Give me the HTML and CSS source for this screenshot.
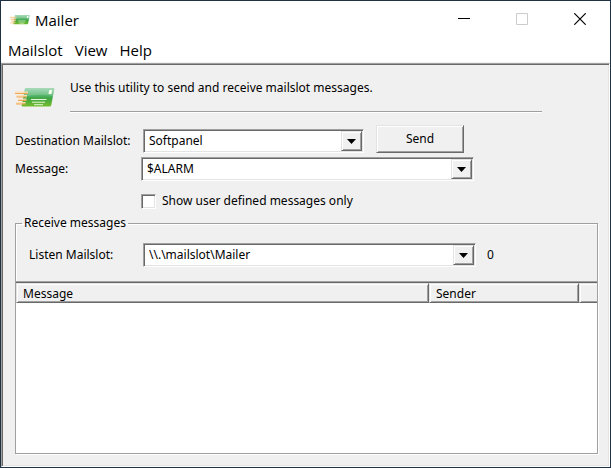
FILE: index.html
```html
<!DOCTYPE html>
<html lang="en">
<head>
<meta charset="utf-8">
<title>Mailer</title>
<link rel="stylesheet" href="styles.css">
</head>
<body>
<svg class="defs" aria-hidden="true">
  <defs>
    <linearGradient id="green" x1="0" y1="0" x2="0" y2="1">
      <stop offset="0" stop-color="#9bd4b0"/>
      <stop offset=".4" stop-color="#56b56c"/>
      <stop offset=".55" stop-color="#3fa545"/>
      <stop offset="1" stop-color="#74bd2c"/>
    </linearGradient>
    <symbol id="mail" viewBox="0 0 40 22">
      <path d="M11 1h27.500q1 0 .8 1l-3 16q-.3 1.500-1.600 1.500H7.500q-1 0-.8-1L9.800 2q.2-1 1.200-1z" fill="url(#green)"/>
      <path d="M11 1h27.500q1 0 .8 1l-1.300 7Q24 6 9 10L9.800 2q.2-1 1.200-1z" fill="#fff" opacity=".15"/>
      <path d="M34.300 3h2.900l-.8 4h-2.900z" fill="#f4fff0"/>
      <path d="M16 12.500h15.500M17 15.200h13M19 17.700h9" stroke="#e4f7da" stroke-width="1"/>
      <path d="M0 6.300h13M1.500 9.800h10.500M3 13.300h8.500M1 16.800h9.500" stroke="#f0a850" stroke-width="1.300"/>
      <path d="M0 5.100h13M1.500 8.600h10.500M3 12.100h8.500M1 15.600h9.500" stroke="#fbdfb8" stroke-width="1.300"/>
    </symbol>
  </defs>
</svg>
<div class="window">
  <header class="titlebar">
    <svg class="app-icon" aria-hidden="true"><use href="#mail"/></svg>
    <h1>Mailer</h1>
    <div class="controls">
      <button type="button" aria-label="Minimize"><svg width="12" height="12" viewBox="0 0 12 12"><path d="M0 5.500h12" stroke="#000"/></svg></button>
      <button type="button" aria-label="Maximize" disabled><svg width="12" height="12" viewBox="0 0 12 12"><path d="M.5.5h11v11H.5z" fill="none" stroke="#ccc"/></svg></button>
      <button type="button" aria-label="Close"><svg width="12" height="12" viewBox="0 0 12 12"><path d="M.3.3l11.400 11.400M11.700.3L.3 11.700" stroke="#000" stroke-width="1.200"/></svg></button>
    </div>
  </header>
  <nav class="menubar">
    <button type="button">Mailslot</button>
    <button type="button">View</button>
    <button type="button">Help</button>
  </nav>
  <main class="content">
    <div class="intro">
      <svg class="intro-icon" aria-hidden="true"><use href="#mail"/></svg>
      <p>Use this utility to send and receive mailslot messages.</p>
    </div>
    <form class="send-form">
      <div class="row destination">
        <label for="destination">Destination Mailslot:</label>
        <span class="combo short">
          <select id="destination"><option>Softpanel</option></select>
          <span class="drop"><svg width="9" height="5" viewBox="0 0 9 5"><path d="M0 0h9L4.500 5z"/></svg></span>
        </span>
        <button class="send" type="button">Send</button>
      </div>
      <div class="row">
        <label for="message">Message:</label>
        <span class="combo">
          <select id="message"><option>$ALARM</option></select>
          <span class="drop"><svg width="9" height="5" viewBox="0 0 9 5"><path d="M0 0h9L4.500 5z"/></svg></span>
        </span>
      </div>
      <label class="check"><input type="checkbox">Show user defined messages only</label>
    </form>
    <fieldset class="receive">
      <legend>Receive messages</legend>
      <div class="row listen">
        <label for="listen">Listen Mailslot:</label>
        <span class="combo">
          <select id="listen"><option>\\.\mailslot\Mailer</option></select>
          <span class="drop"><svg width="9" height="5" viewBox="0 0 9 5"><path d="M0 0h9L4.500 5z"/></svg></span>
        </span>
        <output>0</output>
      </div>
      <table>
        <colgroup><col><col class="sender"><col class="rest"></colgroup>
        <thead><tr><th>Message</th><th>Sender</th><th></th></tr></thead>
      </table>
    </fieldset>
  </main>
</div>
</body>
</html>
```
FILE: styles.css
```css
* {
  box-sizing: border-box;
}

body {
  margin: 0;
  font: 12px/16px "Noto Sans", Tahoma, sans-serif;
  color: #000;
}

button, select {
  font: inherit;
  color: inherit;
}

.defs {
  position: absolute;
  width: 0;
  height: 0;
}

.window {
  display: flex;
  flex-direction: column;
  min-height: 100vh;
  border: 1px solid #1f3142;
  background: #fff;
}

.titlebar {
  display: flex;
  align-items: center;
  height: 37px;
  padding-left: 9px;
}

.app-icon {
  width: 20px;
  height: 12px;
}

h1 {
  margin: 0 auto 0 5px;
  font: 15px/20px "Open Sans", sans-serif;
}

.controls {
  display: flex;
}

.controls button {
  display: flex;
  align-items: center;
  justify-content: center;
  width: 58px;
  height: 37px;
  padding: 0 2px 2px 0;
  border: 0;
  background: none;
}

.menubar {
  display: flex;
  gap: 12px;
  height: 25px;
  padding-left: 7px;
  border-bottom: 1px solid #f0f0f0;
}

.menubar button {
  padding: 0;
  border: 0;
  background: none;
  font: 15px/24px "Open Sans", sans-serif;
}

.content,
.combo,
.check input {
  border: 1px solid;
  border-color: #a0a0a0 #fff #fff #a0a0a0;
  box-shadow: inset 1px 1px #696969, inset -1px -1px #e3e3e3;
}

.drop,
.send,
th {
  background: #f0f0f0;
  border: 1px solid;
  border-color: #e3e3e3 #696969 #696969 #e3e3e3;
  box-shadow: inset 1px 1px #fff, inset -1px -1px #a0a0a0;
}

.content {
  flex: 1;
  display: flex;
  flex-direction: column;
  padding: 14px 11px 12px 12px;
  background: #f0f0f0;
}

.intro {
  display: flex;
  gap: 15px;
  margin-left: 1px;
}

.intro-icon {
  width: 40px;
  height: 22px;
  margin-top: 9px;
}

.intro p {
  flex: 1;
  max-width: 472px;
  height: 34px;
  margin: 0;
  padding-top: 2px;
  border-bottom: 1px solid #a0a0a0;
  box-shadow: 0 1px #fff;
}

.send-form {
  padding: 13px 0 6px 1px;
}

.row {
  display: flex;
  align-items: center;
}

.row label {
  width: 126px;
  white-space: nowrap;
}

.destination {
  gap: 2px;
}

.combo {
  display: flex;
  width: 333px;
  height: 24px;
  padding: 1px;
  background: #fff;
}

.combo.short {
  width: 221px;
}

.combo select {
  flex: 1;
  min-width: 0;
  padding: 0 4px;
  border: 0;
  outline: 0;
  background: transparent;
  appearance: none;
}

.drop {
  display: flex;
  align-items: center;
  justify-content: center;
  width: 21px;
}

.send {
  width: 88px;
  height: 28px;
  margin: 0 0 4px 10px;
  padding: 0;
}

.check {
  display: flex;
  align-items: center;
  gap: 6px;
  width: max-content;
  margin: 12px 0 0 126px;
}

.check input {
  width: 15px;
  height: 15px;
  margin: 0;
  appearance: none;
  background: #fff;
}

.receive {
  flex: 1;
  min-width: 0;
  margin: 0 0 0 1px;
  padding: 0;
  border: 1px solid #a0a0a0;
  box-shadow: 1px 1px #fff;
  background: #fff;
}

legend {
  margin-left: 6px;
  padding: 0 2px;
  background: #f0f0f0;
}

.listen {
  margin-top: -7px;
  padding: 19px 0 14px 13px;
  background: #f0f0f0;
  box-shadow: inset 1px 1px #fff;
}

.listen label {
  width: 114px;
}

.listen output {
  margin-left: 11px;
}

table {
  width: 100%;
  table-layout: fixed;
  border-spacing: 0;
  border-top: 1px solid #a0a0a0;
  box-shadow: inset 0 1px #696969;
  padding-top: 1px;
}

.sender {
  width: 150px;
}

.rest {
  width: 18px;
}

th {
  height: 20px;
  padding: 1px 6px 0;
  font-weight: normal;
  line-height: 17px;
  text-align: left;
}

th:last-child {
  border-right: 0;
  box-shadow: inset 1px 1px #fff, inset 0 -1px #a0a0a0;
}
```
